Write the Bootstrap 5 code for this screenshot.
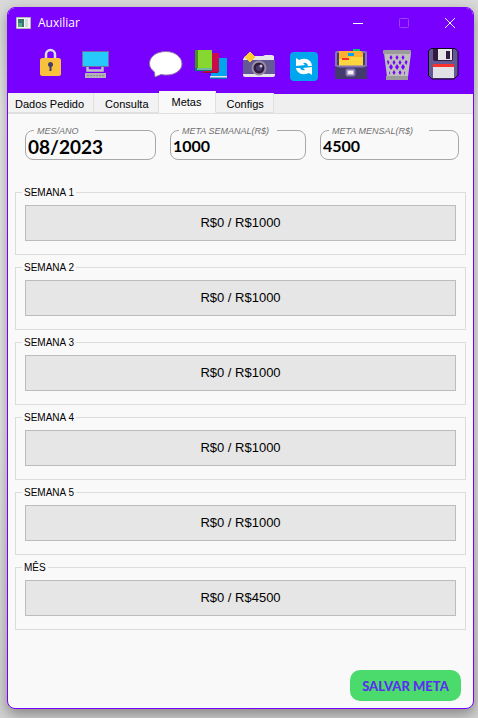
<!DOCTYPE html>
<html lang="pt-BR">
<head>
<meta charset="utf-8">
<meta name="viewport" content="width=device-width, initial-scale=1">
<title>Auxiliar</title>
<link href="https://cdn.jsdelivr.net/npm/bootstrap@5.3.0/dist/css/bootstrap.min.css" rel="stylesheet">
<style>
body{font-family:"Liberation Sans",Arial,sans-serif;font-size:11px;line-height:12px;color:#000;background:linear-gradient(#d9d9d9,#e9e9e9 15%,#e6e6e6 60%,#d2d2d2)}
.desktop{padding:7px 4px 9px 7px}
.app-window{background:#f9f9f9;border:1px solid #7800ff;border-radius:8px;box-shadow:0 5px 14px rgba(0,0,0,.38)}
.app-head{background:#7800ff;border-radius:7px 7px 0 0;padding-bottom:13px}
.title-bar{height:30px;padding-left:8px;gap:7px}
.title-text{font:12px/16px "Open Sans","Segoe UI",sans-serif;color:#fff}
.win-btn{width:46px;height:30px}
.tool-row{padding:7px 0 0 24px;gap:10px}
.tool-row .btn{width:36px;height:36px}
.tool-gap{margin-right:24px}
svg{display:block}
.tab-strip{height:20px;background:#efefef;border-bottom:1px solid #e0e0e0}
.tab-strip .nav-link{height:20px;padding:0 9px 0 11px;border:1px solid #e0e0e0;border-width:0 1px 1px 0;border-radius:0;margin:0;color:#000;background:#f2f2f2;line-height:22px}
.tab-strip .nav-item:first-child .nav-link{padding-left:7px}
.tab-strip .nav-link.active{height:22px;padding:0 13px;background:#f9f9f9;border-color:#f9f9f9;border-right-color:#e0e0e0;color:#000}
.page-pane{padding:9px 7px 7px}
.goal-fields{display:grid;grid-template-columns:131fr 136fr 139fr;gap:14px;padding:0 7px 0 10px;margin-bottom:25px}
.goal-field{border:1px solid #a8a8a8;border-radius:8px;padding:0 2px 4px}
.goal-field legend{font-size:9px;line-height:11px;font-style:italic;color:#707070;padding:3px 8px 0 3px;margin:0 0 0 6px}
.goal-field legend.wide-gap{padding-right:16px}
.goal-field .form-control{height:18px;padding:0;border:0;border-radius:0;background:transparent;color:#000;font:700 16px/18px Lato,"Century Gothic",sans-serif}
.goal-field .form-control.month-value{font-size:19px}
.week-list{gap:5px}
.week-box{border:1px solid #dcdcdc;padding:6px 9px 13px}
.week-box legend{font-size:10px;line-height:12px;padding:2px 2px 0;margin:0 0 0 -3px}
.week-box .progress{height:36px;border:1px solid #bcbcbc;border-radius:0;background:#e6e6e6;font-size:13px;line-height:16px}
.save-btn{width:111px;height:31px;margin-right:5px;padding:0;border:0;border-radius:10px;background:#4bdb6c;color:#5a2ff0;font:900 13px/32px Lato,"Century Gothic",sans-serif}
.save-btn:hover{background:#3fcf60;color:#5a2ff0}
</style>
<script src="https://cdn.jsdelivr.net/npm/bootstrap@5.3.0/dist/js/bootstrap.bundle.min.js"></script>
</head>
<body>
<div class="desktop d-flex min-vh-100">
<main class="app-window d-flex flex-column flex-grow-1">
<header class="app-head">
  <div class="title-bar d-flex align-items-center">
    <svg width="15" height="12" viewBox="0 0 15 12"><path fill="#f4f4f4" stroke="#b5b5b5" d="M.5.5h14v11H.5z"/><path fill="#33776f" d="M2 2h6v8H2z"/><path fill="#58a487" d="M2 6h4v4H2z"/><path fill="#d5dde0" d="M9 2h3v8H9z"/></svg>
    <span class="title-text">Auxiliar</span>
    <div class="d-flex ms-auto">
      <button class="btn p-0 border-0 win-btn d-flex align-items-center justify-content-center" aria-label="Minimizar"><svg width="12" height="12"><path d="M1 6.5h10" stroke="#fff"/></svg></button>
      <button class="btn p-0 border-0 win-btn d-flex align-items-center justify-content-center" aria-label="Maximizar"><svg width="12" height="12"><rect x="1.5" y="1.5" width="9" height="9" rx="1" fill="none" stroke="#9a42ff"/></svg></button>
      <button class="btn p-0 border-0 win-btn d-flex align-items-center justify-content-center" aria-label="Fechar"><svg width="12" height="12"><path d="M1 1l10 10M11 1L1 11" stroke="#fff"/></svg></button>
    </div>
  </div>
  <div class="tool-row d-flex" role="toolbar" aria-label="Ferramentas">
    <button class="btn p-0 border-0" aria-label="Bloquear"><svg width="36" height="36"><path d="M14 15V9.500a4.500 4.500 0 0 1 9 0V15" fill="none" stroke="#dcdce4" stroke-width="2.500"/><rect x="8" y="13" width="21" height="18" rx="2.500" fill="#f9c23c"/><circle cx="18.500" cy="19.500" r="2.500" fill="#433b6b"/><path d="M17.500 20h2v6h-2z" fill="#433b6b"/></svg></button>
    <button class="btn p-0 border-0 tool-gap" aria-label="Computador"><svg width="36" height="36"><rect x="4.500" y="6.500" width="26" height="15" fill="#26c9fc" stroke="#7169a8"/><path d="M9.500 22v3.500h15V22" fill="none" stroke="#c2c2cc" stroke-width="2.500"/><path d="M7 28h21v5H7z" fill="#b4b4b4"/><path d="M9 30.500h18" stroke="#8c8c94" stroke-dasharray="2 1"/></svg></button>
    <button class="btn p-0 border-0" aria-label="Mensagem"><svg width="36" height="36"><path d="M18 6.500C8 6.500 1.500 12 1.500 18.500c0 4 2 6 5 8.500l.5 5 6-2.500c12 2.500 21-3.500 21-10.500 0-7-7-12.500-16-12.500z" fill="#fff" stroke="#8d70a9"/></svg></button>
    <button class="btn p-0 border-0" aria-label="Livros"><svg width="36" height="36"><path d="M17 13h16v21H17z" fill="#00a6ed"/><path d="M16 31h17v2H16z" fill="#e6e6e6"/><path d="M16 32.500h17v1.500H16z" fill="#0074ba"/><path d="M9 8h16v19H9z" fill="#ca0b4a"/><path d="M8 27.500h16" stroke="#990838"/><path d="M1 5h17v19H1z" fill="#86d72f"/><path d="M1 5h3v19H1z" fill="#44911b"/><path d="M1 23h17v3H1z" fill="#008463"/><path d="M3 24h15" stroke="#e6e6e6"/></svg></button>
    <button class="btn p-0 border-0" aria-label="Foto"><svg width="36" height="36"><path d="M4 13q0-2 2-2h17l2-1h7l2 1v4q1 0 1 2v13q0 2-2 2H5q-2 0-2-2V14z" fill="#e6e6e6"/><path d="M3 15h32v14H3z" fill="#635994"/><circle cx="19" cy="23" r="7.500" fill="#998ea4"/><circle cx="19" cy="23" r="5.500" fill="#321b41"/><circle cx="19" cy="23" r="3" fill="#433b6b"/><circle cx="21" cy="21" r="1.500" fill="#cdc4d6"/><path d="M10 7l5 5-5 5-5-5z" fill="#ffce31" stroke="#ffce31"/></svg></button>
    <button class="btn p-0 border-0" aria-label="Atualizar"><svg width="36" height="36"><rect x="4" y="7" width="28" height="29" rx="4" fill="#00a6ed"/><path d="M10 13l3 2q7-3 11 1 2 2 2 5h-4q-1-4-5-3l2 2-9 1zM26 30l-3-2q-7 3-11-1-2-2-2-4h4q1 3 5 2l-2-2 9-1z" fill="#fff"/></svg></button>
    <button class="btn p-0 border-0" aria-label="Arquivo"><svg width="36" height="36"><rect x="3" y="6" width="32" height="17" rx="2" fill="#8573b5"/><path d="M5 8h28v14H5z" fill="#433b6b"/><path d="M21 4h7v5h-7z" fill="#00c875"/><path d="M7 6h22l2 2v13H7z" fill="#ffb02e"/><path d="M7 14h7l2-2h15v9H7z" fill="#fcd53f"/><path d="M16 8h6v3h-6z" fill="#00a6ed"/><path d="M10 13h7v2h-7z" fill="#f8312f"/><path d="M3 20l4 1h24l4-1v13q0 1-1 1H4q-1 0-1-1z" fill="#433b6b"/><path d="M3 20l4 1.500h24l4-1.500" fill="none" stroke="#8573b5" stroke-width="2"/><rect x="14.500" y="24.500" width="8" height="6" rx="1" fill="#f4f4f4" stroke="#8573b5" stroke-width="2"/></svg></button>
    <button class="btn p-0 border-0" aria-label="Lixeira"><svg width="36" height="36"><path d="M6 8h27l-3 24H9z" fill="#bebebe"/><g fill="#7800ff"><path d="M13 10l1.500 2.500L13 15l-1.500-2.500zM19 10l1.500 2.500L19 15l-1.500-2.500zM25 10l1.500 2.500L25 15l-1.500-2.500zM10 15l1.500 2.500L10 20l-1-4zM16 15l1.500 2.500L16 20l-1.500-2.500zM22 15l1.500 2.500L22 20l-1.500-2.500zM28 15l1.500 1.500-1 3.500-2-2.500zM13 19l2 3-2 3-2-3zM19 19l2 3-2 3-2-3zM25 19l2 3-2 3-2-3zM16 25l1.500 2.500L16 30l-1.500-2.500zM22 25l1.500 2.500L22 30l-1.500-2.500zM11 26l1 2-1 2zM27 26l-1 2 1 2z"/></g><rect x="5" y="5" width="28" height="4" rx="1" fill="#9b9b9b"/><path d="M8 31h22v4H8z" fill="#9b9b9b"/></svg></button>
    <button class="btn p-0 border-0" aria-label="Salvar"><svg width="36" height="36"><path d="M7 3.500h24l3 3V30l-4 4H8l-3.500-3.500V6z" fill="#635994" stroke="#100820"/><path d="M9 4h20v10q0 2-2 2H11q-2 0-2-2z" fill="#321b41"/><path d="M14 4h14v11H14z" fill="#e6e6e6"/><path d="M22 6h4v8h-4z" fill="#321b41"/><path d="M9 19h21v14H9z" fill="#e1e1e6"/><path d="M9 19h21v3H9z" fill="#f8312f"/></svg></button>
  </div>
</header>
<nav aria-label="Seções">
  <ul class="nav nav-tabs tab-strip flex-nowrap align-items-end">
    <li class="nav-item"><button class="nav-link">Dados Pedido</button></li>
    <li class="nav-item"><button class="nav-link">Consulta</button></li>
    <li class="nav-item"><button class="nav-link active" aria-current="page">Metas</button></li>
    <li class="nav-item"><button class="nav-link">Configs</button></li>
  </ul>
</nav>
<form class="page-pane d-flex flex-column flex-grow-1">
  <div class="goal-fields">
    <fieldset class="goal-field"><legend class="float-none w-auto wide-gap" id="l-mes">MES/ANO</legend><input class="form-control month-value shadow-none" type="text" value="08/2023" aria-labelledby="l-mes"></fieldset>
    <fieldset class="goal-field"><legend class="float-none w-auto" id="l-sem">META SEMANAL(R$)</legend><input class="form-control shadow-none" type="text" value="1000" aria-labelledby="l-sem"></fieldset>
    <fieldset class="goal-field"><legend class="float-none w-auto wide-gap" id="l-men">META MENSAL(R$)</legend><input class="form-control shadow-none" type="text" value="4500" aria-labelledby="l-men"></fieldset>
  </div>
  <div class="week-list d-flex flex-column">
    <fieldset class="week-box"><legend class="float-none w-auto">SEMANA 1</legend><div class="progress align-items-center justify-content-center" role="progressbar" aria-label="Semana 1" aria-valuenow="0" aria-valuemin="0" aria-valuemax="1000">R$0 / R$1000</div></fieldset>
    <fieldset class="week-box"><legend class="float-none w-auto">SEMANA 2</legend><div class="progress align-items-center justify-content-center" role="progressbar" aria-label="Semana 2" aria-valuenow="0" aria-valuemin="0" aria-valuemax="1000">R$0 / R$1000</div></fieldset>
    <fieldset class="week-box"><legend class="float-none w-auto">SEMANA 3</legend><div class="progress align-items-center justify-content-center" role="progressbar" aria-label="Semana 3" aria-valuenow="0" aria-valuemin="0" aria-valuemax="1000">R$0 / R$1000</div></fieldset>
    <fieldset class="week-box"><legend class="float-none w-auto">SEMANA 4</legend><div class="progress align-items-center justify-content-center" role="progressbar" aria-label="Semana 4" aria-valuenow="0" aria-valuemin="0" aria-valuemax="1000">R$0 / R$1000</div></fieldset>
    <fieldset class="week-box"><legend class="float-none w-auto">SEMANA 5</legend><div class="progress align-items-center justify-content-center" role="progressbar" aria-label="Semana 5" aria-valuenow="0" aria-valuemin="0" aria-valuemax="1000">R$0 / R$1000</div></fieldset>
    <fieldset class="week-box"><legend class="float-none w-auto">MÊS</legend><div class="progress align-items-center justify-content-center" role="progressbar" aria-label="Mês" aria-valuenow="0" aria-valuemin="0" aria-valuemax="4500">R$0 / R$4500</div></fieldset>
  </div>
  <button type="button" class="btn save-btn mt-auto align-self-end">SALVAR META</button>
</form>
</main>
</div>
</body>
</html>
